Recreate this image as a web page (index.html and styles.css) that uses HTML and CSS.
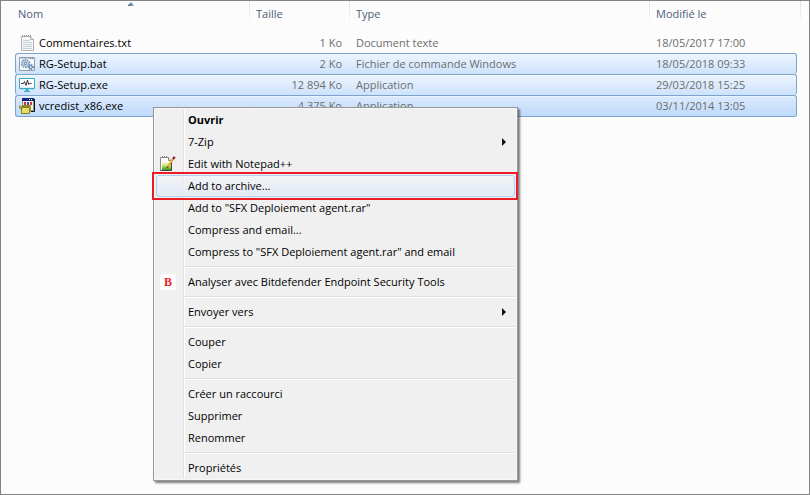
FILE: index.html
```html
<!DOCTYPE html>
<html lang="fr">
<head>
<meta charset="utf-8">
<title>SFX Deploiement agent</title>
<link rel="stylesheet" href="styles.css">
</head>
<body>
<main class="window">
  <table class="files">
    <colgroup>
      <col class="col-name"><col class="col-size"><col class="col-type"><col class="col-date">
    </colgroup>
    <thead>
      <tr>
        <th class="sorted" scope="col" aria-sort="ascending">Nom</th>
        <th scope="col">Taille</th>
        <th scope="col">Type</th>
        <th scope="col">Modifié le</th>
      </tr>
    </thead>
    <tbody>
      <tr>
        <td>
          <div class="file">
            <svg class="icon" viewBox="0 0 16 16" aria-hidden="true">
              <path d="M2.500 1.500h9l3 3v11h-12z" fill="#f7f7f7" stroke="#b0b0b0"/>
              <path d="M11.500 1.500v3h3" fill="#e4e4e4" stroke="#b0b0b0"/>
              <path d="M4 5.500h7M4 7.500h9M4 9.500h9M4 11.500h9M4 13.500h9" stroke="#c3d0d6"/>
              <path d="M3.500 0v2M5.500 0v2M7.500 0v2M9.500 0v2M11.500 0v2" stroke="#9b9b9b"/>
            </svg>
            <span>Commentaires.txt</span>
          </div>
        </td>
        <td class="size">1 Ko</td>
        <td>Document texte</td>
        <td>18/05/2017 17:00</td>
      </tr>
      <tr class="selected">
        <td>
          <div class="file">
            <svg class="icon" viewBox="0 0 16 16" aria-hidden="true">
              <path d="M.5 1.500h15v13H.5z" fill="#f7fafc" stroke="#929ca6"/>
              <path d="M1 2.500h14" stroke="#c9d2da"/>
              <path d="M11 2.500h1M13 2.500h1" stroke="#56748c"/>
              <circle cx="6.500" cy="7.500" r="4" fill="none" stroke="#6e93b5" stroke-width="1.500" stroke-dasharray="1.500 1"/>
              <circle cx="6.500" cy="7.500" r="3" fill="#dce9f4" stroke="#7fa3c4"/>
              <circle cx="6.500" cy="7.500" r="1.200" fill="#fff" stroke="#42698e"/>
              <circle cx="11.800" cy="11" r="2.300" fill="none" stroke="#5880a5" stroke-width="1.500" stroke-dasharray="1.200 .8"/>
              <circle cx="11.800" cy="11" r="1.400" fill="#fff" stroke="#5880a5"/>
            </svg>
            <span>RG-Setup.bat</span>
          </div>
        </td>
        <td class="size">2 Ko</td>
        <td>Fichier de commande Windows</td>
        <td>18/05/2018 09:33</td>
      </tr>
      <tr class="selected">
        <td>
          <div class="file">
            <svg class="icon" viewBox="0 0 16 16" aria-hidden="true">
              <path d="M.5 1.500h15v10H.5z" fill="#fff" stroke="#35adc4"/>
              <path d="M1 11.500h14" stroke="#35adc4" stroke-width="1.400"/>
              <path d="M2 6.500h2.500l1-2 1.500 4 1.500-5.500 1.200 4.500 1-1h1.800" fill="none" stroke="#333"/>
              <path d="M6.500 12h3v2h-3z" fill="#35adc4"/>
              <path d="M5 14.500h6" stroke="#35adc4"/>
            </svg>
            <span>RG-Setup.exe</span>
          </div>
        </td>
        <td class="size">12 894 Ko</td>
        <td>Application</td>
        <td>29/03/2018 15:25</td>
      </tr>
      <tr class="selected focused">
        <td>
          <div class="file">
            <svg class="icon" viewBox="0 0 16 16" aria-hidden="true">
              <path d="M3.500.5h11v12h-11z" fill="#f2f2f2" stroke="#8a8a8a"/>
              <path d="M3 0h12v3H3z" fill="#14277c"/>
              <path d="M10 1h1v1h-1zM12 1h1v1h-1z" fill="#fff"/>
              <path d="M5 4h2v3H5z" fill="#d0342f"/>
              <path d="M8 4h2v3H8z" fill="#2b50b8"/>
              <path d="M11 4h2v3h-2z" fill="#d0342f"/>
              <path d="M15.500 1v12.500H12" fill="none" stroke="#111"/>
              <path d="M2 9l2-2h8l-2 2z" fill="#8f8520"/>
              <path d="M10 9l2-2v6l-2 2.500z" fill="#a59a28"/>
              <path d="M2.500 9.500h8v6h-8z" fill="#e9df68" stroke="#857c20"/>
              <path d="M2.500 9L.8 7.500 0 9.500l2.500 2z" fill="#c9be45" stroke="#625b18" stroke-width=".6"/>
            </svg>
            <span>vcredist_x86.exe</span>
          </div>
        </td>
        <td class="size">4 375 Ko</td>
        <td>Application</td>
        <td>03/11/2014 13:05</td>
      </tr>
    </tbody>
  </table>

  <div class="menu" role="menu">
    <button class="item default" role="menuitem">Ouvrir</button>
    <button class="item submenu" role="menuitem" aria-haspopup="true">7-Zip</button>
    <button class="item" role="menuitem">
      <svg class="icon" viewBox="0 0 16 16" aria-hidden="true">
        <defs>
          <linearGradient id="page" x1="0" y1="0" x2="0" y2="1">
            <stop offset=".25" stop-color="#fff"/>
            <stop offset=".6" stop-color="#c3e66a"/>
            <stop offset="1" stop-color="#2e9a1c"/>
          </linearGradient>
        </defs>
        <path d="M.5 1.500h8l3 3v10H.5z" fill="#fff" stroke="#8a8a8a"/>
        <path d="M2 3h6v3h3v8H2z" fill="url(#page)"/>
        <path d="M.5 14.500h11V6" fill="none" stroke="#444"/>
        <path d="M8.500 1.500v3h3" fill="#eee" stroke="#888"/>
        <path d="M2.500 0v2M4.500 0v2M6.500 0v2" stroke="#888"/>
        <path d="M7.500 11L13 3" stroke="#d98a12" stroke-width="2"/>
        <path d="M7.500 10.500L12.500 3.200" stroke="#ffd34d"/>
        <path d="M6.500 12.500l.3-2.300 1.700 1.200z" fill="#553a10"/>
        <path d="M13 3L14.700.8" stroke="#8d1a1a" stroke-width="2.200"/>
      </svg>
      Edit with Notepad++
    </button>
    <button class="item active" role="menuitem">Add to archive...</button>
    <button class="item" role="menuitem">Add to "SFX Deploiement agent.rar"</button>
    <button class="item" role="menuitem">Compress and email...</button>
    <button class="item" role="menuitem">Compress to "SFX Deploiement agent.rar" and email</button>
    <hr>
    <button class="item" role="menuitem">
      <span class="icon badge" aria-hidden="true">B</span>
      Analyser avec Bitdefender Endpoint Security Tools
    </button>
    <hr>
    <button class="item submenu" role="menuitem" aria-haspopup="true">Envoyer vers</button>
    <hr>
    <button class="item" role="menuitem">Couper</button>
    <button class="item" role="menuitem">Copier</button>
    <hr>
    <button class="item" role="menuitem">Créer un raccourci</button>
    <button class="item" role="menuitem">Supprimer</button>
    <button class="item" role="menuitem">Renommer</button>
    <hr>
    <button class="item" role="menuitem">Propriétés</button>
  </div>
</main>
</body>
</html>
```
FILE: styles.css
```css
* {
  box-sizing: border-box;
}

body {
  margin: 0;
  font: 11px/20px "Open Sans", "Noto Sans", sans-serif;
  color: #000;
}

.window {
  position: relative;
  min-height: 100vh;
  padding: 0 12px 0 14px;
  border: 1px solid #838383;
  background: #fcfcfc;
}

/* File list */
.files {
  width: 100%;
  table-layout: fixed;
  border-collapse: separate;
  border-spacing: 0;
}

.col-date { width: 147px; }
.col-size { width: 100px; }
.col-type { width: 300px; }

th {
  position: relative;
  height: 31px;
  padding: 3px 6px 0;
  vertical-align: top;
  text-align: left;
  font-weight: 400;
  color: #4c607a;
}

th:first-child {
  padding-left: 3px;
}

th::after {
  content: "";
  position: absolute;
  top: 0;
  right: 0;
  width: 1px;
  height: 22px;
  background: linear-gradient(#d5e6f7, #e3eefa 60%, #fcfcfc);
}

th:last-child::after {
  right: -4px;
}

.sorted::before {
  content: "";
  position: absolute;
  top: 1px;
  left: calc(50% - 5px);
  width: 7px;
  height: 4px;
  background: linear-gradient(90deg, #3c5e72, #a5d3ea);
  clip-path: polygon(50% 0, 100% 100%, 0 100%);
}

td {
  height: 21px;
  padding: 0 6px;
  border-top: 1px solid transparent;
  white-space: nowrap;
  color: #6d6d6d;
}

td:first-child {
  padding: 0;
  border-left: 1px solid transparent;
  color: #000;
}

.size {
  padding-right: 8px;
  text-align: right;
}

.file {
  display: flex;
  align-items: center;
  gap: 4px;
  padding-left: 3px;
}

.icon {
  flex: none;
  width: 16px;
  height: 16px;
}

.selected td {
  border-top-color: #7da2ce;
  background: linear-gradient(#edf5fe, #cde2fc);
  box-shadow: inset 0 1px #f3f9ff;
}

.focused td {
  height: 22px;
  border-bottom: 1px solid #7da2ce;
  background: linear-gradient(#dceafc, #bedafc);
  box-shadow: inset 0 1px #e8f2fd;
}

.selected td:first-child {
  border-left-color: #7da2ce;
  border-radius: 3px 0 0 3px;
}

.selected td:last-child {
  border-right: 1px solid #7da2ce;
  border-radius: 0 3px 3px 0;
}

/* Context menu, opened over the list */
.menu {
  position: absolute;
  top: 106px;
  left: 152px;
  width: 365px;
  padding: 1px 2px;
  border: 1px solid #979797;
  background:
    linear-gradient(90deg, #e0e1e1 1px, #fff 1px) 29px 2px / 2px calc(100% - 4px) no-repeat,
    #f0f0f0;
  box-shadow: inset 0 0 0 1px #f7f7f7, 2px 2px 2px rgb(0 0 0 / 50%);
}

.item {
  position: relative;
  display: flex;
  align-items: center;
  width: 100%;
  height: 22px;
  padding: 0 0 0 31px;
  border: 1px solid transparent;
  border-radius: 3px;
  background: none;
  font: inherit;
  color: inherit;
  white-space: nowrap;
}

.item .icon {
  margin: 0 12px 0 -28px;
}

.default {
  font-weight: 700;
}

.active {
  border-color: #aecff7;
  background: linear-gradient(rgb(242 244 248 / 70%), rgb(226 234 246 / 90%));
}

.active::before {
  content: "";
  position: absolute;
  inset: -4px -4px -4px -5px;
  border: 2px solid #ed1c24;
}

.submenu::after {
  content: "";
  width: 4px;
  height: 8px;
  margin: 0 8px 0 auto;
  background: #111;
  clip-path: polygon(0 0, 100% 50%, 0 100%);
}

.badge {
  border-radius: 3px;
  background: #fff;
  font: 700 12px/16px "Liberation Serif", serif;
  text-align: center;
  color: #ed1c24;
}

hr {
  height: 2px;
  margin: 3px 0 3px 28px;
  border: 0;
  border-top: 1px solid #e0e0e0;
  border-bottom: 1px solid #fff;
}
```
